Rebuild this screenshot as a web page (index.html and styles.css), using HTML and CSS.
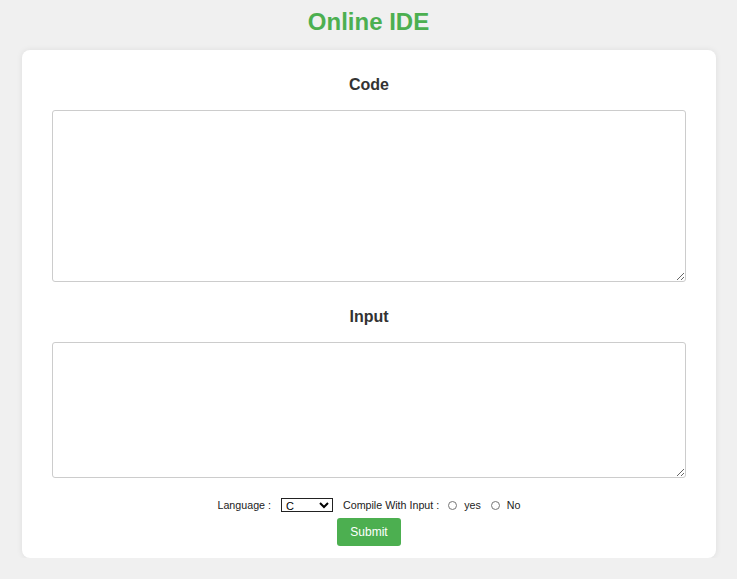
FILE: index.html
```html
<!DOCTYPE html>
<html>
<head>
<meta charset="utf-8">
<link rel="stylesheet" href="styles.css">
</head>
<body>
<h1 class="title">Online IDE</h1>
<div class="card">
  <h3 class="label">Code</h3>
  <textarea class="code"></textarea>
  <h3 class="label label-input">Input</h3>
  <textarea class="input"></textarea>
  <div class="controls">
    <span class="txt">Language :</span>
    <select class="lang"><option>C</option><option>C++</option><option>Java</option><option>Python</option></select>
    <span class="txt">Compile With Input :</span>
    <input type="radio" name="ci" class="radio" id="y"><label for="y" class="txt rlabel">yes</label>
    <input type="radio" name="ci" class="radio" id="n"><label for="n" class="txt rlabel">No</label>
  </div>
  <div class="actions"><button class="submit">Submit</button></div>
</div>
</body>
</html>
```
FILE: styles.css
```css
html, body { margin: 0; padding: 0; }
body {
  background: #f0f0f0;
  font-family: "Liberation Sans", Arial, sans-serif;
  color: #333;
}
.title {
  margin: 8px 0 14px;
  text-align: center;
  font-size: 24px;
  line-height: 28px;
  color: #4caf50;
  font-weight: bold;
}
.card {
  margin: 0 21px 0 22px;
  background: #fff;
  border-radius: 8px;
  box-shadow: 0 0 6px rgba(0,0,0,0.08);
  padding: 25px 30px 12px;
}
.label {
  margin: 0 0 15px;
  text-align: center;
  font-size: 16px;
  line-height: 20px;
  font-weight: bold;
  color: #333;
}
.label-input { margin-top: 25px; }
textarea {
  display: block;
  box-sizing: border-box;
  width: 100%;
  border: 1px solid #ccc;
  border-radius: 3px;
  margin: 0;
  padding: 6px;
  font-family: "Liberation Mono", monospace;
  font-size: 13px;
}
.code { height: 172px; }
.input { height: 136px; }
.controls {
  display: flex;
  justify-content: center;
  align-items: center;
  margin-top: 20px;
  height: 14px;
  font-size: 10.7px;
  color: #222;
}
.txt { line-height: 14px; }
.lang {
  margin: 0 10px 0 10px;
  width: 52px;
  height: 14px;
  font-size: 11px;
  font-family: "Liberation Sans", Arial, sans-serif;
  padding: 0;
  border: 1px solid #222;
  border-radius: 0;
  background: #fff;
  color: #000;
}
.radio {
  width: 9px;
  height: 9px;
  margin: 0 7px 0 9px;
}
.rlabel + .radio { margin-left: 10px; }
.actions {
  display: flex;
  justify-content: center;
  margin-top: 6px;
}
.submit {
  width: 64px;
  height: 28px;
  background: #4caf50;
  color: #fff;
  border: none;
  border-radius: 3px;
  font-family: "Liberation Sans", Arial, sans-serif;
  font-size: 12px;
  padding: 0;
}
```
